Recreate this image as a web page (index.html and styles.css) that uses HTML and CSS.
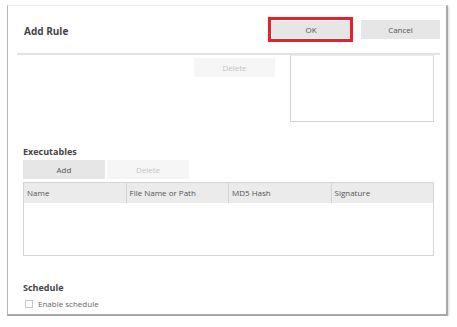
FILE: index.html
```html
<!DOCTYPE html>
<html lang="en">
<head>
  <meta charset="UTF-8" />
  <title>Add Rule</title>
  <link rel="stylesheet" href="styles.css">
</head>
<body>

  <div class="dialog">
    <!-- header: title + actions -->
    <div class="dialog-header">
      <h1 class="dialog-title">Add Rule</h1>
      <div class="header-actions">
        <span class="highlight"><button class="btn btn-ok">OK</button></span>
        <button class="btn btn-cancel">Cancel</button>
      </div>
    </div>

    <div class="dialog-body">
      <!-- previous section, scrolled partly out of view -->
      <div class="prev-section">
        <button class="btn btn-off">Delete</button>
        <div class="prev-list"></div>
      </div>

      <div class="section">
        <div class="section-title">Executables</div>
        <div class="toolbar">
          <button class="btn">Add</button>
          <button class="btn btn-off">Delete</button>
        </div>
        <table class="grid">
          <thead>
            <tr>
              <th>Name</th>
              <th>File Name or Path</th>
              <th>MD5 Hash</th>
              <th>Signature</th>
            </tr>
          </thead>
          <tbody>
            <tr><td colspan="4"></td></tr>
          </tbody>
        </table>
      </div>

      <div class="section schedule">
        <div class="section-title">Schedule</div>
        <label class="check-row">
          <span class="checkbox"></span>
          Enable schedule
        </label>
      </div>
    </div>
  </div>

</body>
</html>
```

FILE: styles.css
```css
* { margin: 0; padding: 0; box-sizing: border-box; }

body {
  background: #ffffff;
  font-family: 'Open Sans', 'DejaVu Sans', sans-serif;
  color: #555;
  font-size: 8px;
}

.dialog {
  margin: 5px 0 0 7px;
  width: 441px;
  height: 311px;
  background: #fff;
  border-top: 1px solid #eeeeee;
  border-left: 1px solid #b5b5b5;
  border-right: 2px solid #a8a8a8;
  border-bottom: 2px solid #a8a8a8;
  box-shadow: 1px 1px 2px #d8d8d8;
}

/* header */
.dialog-header {
  height: 49px;
  margin: 0 6px 0 9px;
  display: flex;
  align-items: center;
  justify-content: space-between;
  border-bottom: 2px solid #e2e2e2;
}
.dialog-title {
  font-size: 10px;
  font-weight: 700;
  color: #444;
  padding-left: 7px;
  padding-top: 2px;
}
.header-actions {
  display: flex;
  align-items: center;
  gap: 8px;
}
.highlight {
  display: block;
  border: 3px solid #e8202a;
  padding: 1px 0 1px 1px;
}

.btn {
  display: block;
  width: 82px;
  height: 19px;
  border: none;
  background: #e6e6e6;
  color: #555;
  font-family: inherit;
  font-size: 8px;
}
.btn-ok { width: 78px; height: 17px; }
.btn-cancel { width: 79px; }
.btn-off {
  background: #f6f6f6;
  color: #c4c4c4;
}

/* body */
.dialog-body {
  padding: 0 12px 0 15px;
}

.prev-section {
  display: flex;
  justify-content: flex-end;
  gap: 15px;
}
.prev-section .btn { margin-top: 3px; width: 81px; }
.prev-list {
  width: 144px;
  height: 67px;
  border: 1px solid #d4d4d4;
  border-top-color: #ececec;
}

.section { margin-top: 24px; }
.section-title {
  font-size: 9px;
  font-weight: 700;
  color: #444;
  line-height: 12px;
  margin-bottom: 2px;
}
.toolbar {
  display: flex;
  gap: 2px;
}

.grid {
  margin-top: 3px;
  width: 411px;
  height: 74px;
  border-collapse: collapse;
  border: 1px solid #d4d4d4;
  table-layout: fixed;
}
.grid th {
  height: 20px;
  background: #ebebeb;
  font-weight: 400;
  text-align: left;
  padding-left: 3px;
  color: #555;
  border-left: 1px solid #d4d4d4;
}
.grid th:first-child { border-left: none; }
.grid td { background: #fff; }

.schedule { margin-top: 26px; }
.check-row {
  margin-top: 4px;
  display: flex;
  align-items: center;
  gap: 5px;
  padding-left: 2px;
  line-height: 12px;
  color: #666;
}
.checkbox {
  width: 8px;
  height: 8px;
  border: 1px solid #c8c8c8;
  background: #fff;
}
```
